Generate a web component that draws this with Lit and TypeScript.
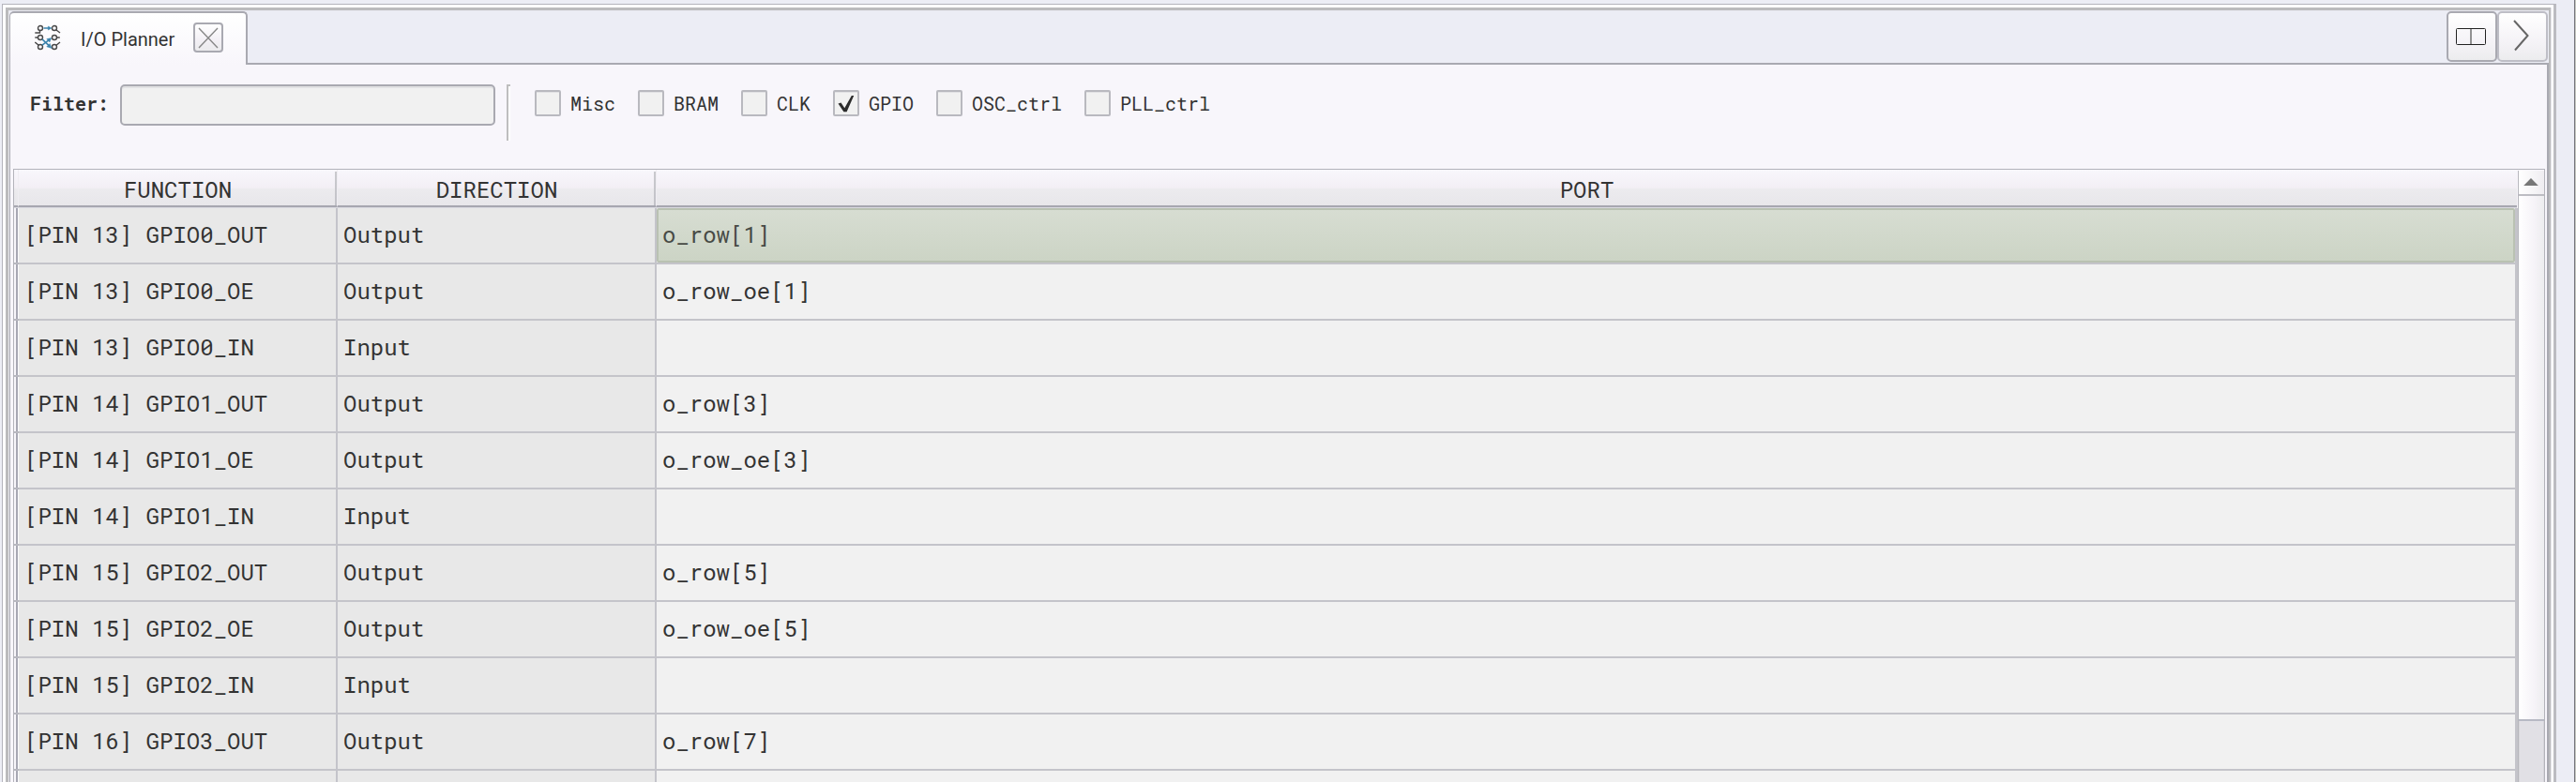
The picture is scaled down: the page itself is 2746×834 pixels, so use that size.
import { LitElement, html, svg, css } from "lit";
import { customElement, property } from "lit/decorators.js";

interface PinRow {
  fn: string;
  dir: string;
  port: string;
}

const ROWS: PinRow[] = [
  { fn: "[PIN 13] GPIO0_OUT", dir: "Output", port: "o_row[1]" },
  { fn: "[PIN 13] GPIO0_OE", dir: "Output", port: "o_row_oe[1]" },
  { fn: "[PIN 13] GPIO0_IN", dir: "Input", port: "" },
  { fn: "[PIN 14] GPIO1_OUT", dir: "Output", port: "o_row[3]" },
  { fn: "[PIN 14] GPIO1_OE", dir: "Output", port: "o_row_oe[3]" },
  { fn: "[PIN 14] GPIO1_IN", dir: "Input", port: "" },
  { fn: "[PIN 15] GPIO2_OUT", dir: "Output", port: "o_row[5]" },
  { fn: "[PIN 15] GPIO2_OE", dir: "Output", port: "o_row_oe[5]" },
  { fn: "[PIN 15] GPIO2_IN", dir: "Input", port: "" },
  { fn: "[PIN 16] GPIO3_OUT", dir: "Output", port: "o_row[7]" },
  { fn: "", dir: "", port: "" },
];

const FILTERS = [
  { name: "Misc", on: false },
  { name: "BRAM", on: false },
  { name: "CLK", on: false },
  { name: "GPIO", on: true },
  { name: "OSC_ctrl", on: false },
  { name: "PLL_ctrl", on: false },
];

@customElement("io-tab-strip")
class IoTabStrip extends LitElement {
  static styles = css`
    :host { display: flex; height: 57px; background: #ecedf5; font-family: Roboto, sans-serif; }
    .tab {
      box-sizing: border-box; width: 254px; display: flex; align-items: center;
      border: 2px solid #a9a9b1; border-bottom: none; border-left-width: 1px;
      border-radius: 5px 5px 0 0;
      background: linear-gradient(#ffffff, #f8f6fb); padding: 0 24px 3px 26px;
    }
    .glyph { display: block; width: 28px; height: 28px; flex: none; }
    .title { flex: 1; padding: 4px 0 0 21px; font-size: 20px; line-height: 24px; color: #333; white-space: nowrap; }
    .close {
      box-sizing: border-box; width: 32px; height: 32px; border: 2px solid #a9a9b1; border-radius: 4px;
      background: linear-gradient(#fff, #f3f0f5 60%, #ebebed);
    }
    .close svg, .btn svg { display: block; }
    .rest { flex: 1; display: flex; justify-content: flex-end; border-bottom: 2px solid #a9a9b1; padding-right: 1px; }
    .btn {
      box-sizing: border-box; width: 54px; height: 54px; border: 2px solid #a9a9b1; border-radius: 5px;
      background: linear-gradient(#fff, #f5f3f7 60%, #ececee);
    }
    .soft { border-color: #bebec6; }
  `;
  render() {
    const ring = (x: number, y: number) => svg`<circle cx=${x} cy=${y} r="2.5"></circle>`;
    return html`
      <div class="tab">
        <svg class="glyph" viewBox="0 0 28 28" fill="none" stroke="#484848" stroke-width="1.4">
          ${[[6, 4], [21, 4], [6, 14], [21, 14], [6, 24], [21, 24]].map(([x, y]) => ring(x, y))}
          <path d="M.3 9H5.5V6.5M23 6l4 3M.3 14h3.2M23.5 14h3.3M.3 19l4 3.3M27 19l-4 3.3" />
          <g stroke="#3d84ad">
            <path d="M9.5 4H16M8 22.2 15.5 16.4M8 15.8 15.5 22.8" stroke-width="1.7" />
            <path d="M14.3 2 17.9 4l-3.6 2zM12.8 15.6l4.9-1-1.8 4.4zM12.8 23.8l5.2 1.6-1.8-5z" fill="#3d84ad" stroke-width=".5" />
          </g>
        </svg>
        <span class="title">I/O Planner</span>
        <div class="close">
          <svg width="28" height="28" viewBox="0 0 28 28" fill="none" stroke="#888" stroke-width="1.4">
            <path d="M4 4 24 25M24 4 4 25" />
          </svg>
        </div>
      </div>
      <div class="rest">
        <div class="btn">
          <svg width="50" height="50" viewBox="0 0 50 50" fill="none" stroke="#222" stroke-width="1">
            <rect x="8.5" y="16.5" width="31" height="17" rx="1" />
            <path d="M24 17v16" stroke="#666" stroke-width="1.4" />
          </svg>
        </div>
        <div class="btn soft">
          <svg width="50" height="50" viewBox="0 0 50 50" fill="none" stroke="#666" stroke-width="2">
            <path d="M16 8 30.5 24 17 39.5" />
          </svg>
        </div>
      </div>
    `;
  }
}

@customElement("io-filter-bar")
class IoFilterBar extends LitElement {
  static styles = css`
    :host {
      display: flex; align-items: flex-start; box-sizing: border-box; height: 111px; padding: 21px 0 0 21px;
      font: 20px/24px "Roboto Mono", "DejaVu Sans Mono", monospace; color: #333;
    }
    .label { width: 96px; padding-top: 8px; font-weight: 700; white-space: nowrap; }
    .input {
      box-sizing: border-box; width: 400px; height: 44px; border: 2px solid #a9a9b1; border-radius: 5px;
      background: #f1f1f1; box-shadow: inset 0 2px 0 #e2e2e4;
    }
    .rule {
      box-sizing: border-box; width: 4px; height: 60px; margin-left: 12px; background: #fff;
      border: solid #bebebe; border-width: 2px 0 0 2px;
    }
    .checks { display: flex; gap: 24px; padding: 6px 0 0 26px; }
    .check { display: flex; align-items: center; gap: 10px; white-space: nowrap; height: 28px; }
    .box {
      box-sizing: border-box; width: 28px; height: 28px; border: 2px solid #b9b9bf; border-radius: 2px;
      background: #f1f1f1; box-shadow: inset 0 1px 0 #e2e2e4;
    }
    .box svg { display: block; }
  `;
  render() {
    return html`
      <span class="label">Filter:</span>
      <div class="input"></div>
      <div class="rule"></div>
      <div class="checks">
        ${FILTERS.map(
          (f) => html`<div class="check">
            <div class="box">
              ${f.on
                ? html`<svg width="24" height="24" viewBox="0 0 24 24"><path d="M3.5 12.6 6.5 11.4 10.3 17.2 17.8 4h2.4L12.6 21.2H9.4Z" fill="#2b2b2b" /></svg>`
                : ""}
            </div>
            <span>${f.name}</span>
          </div>`
        )}
      </div>
    `;
  }
}

@customElement("io-scrollbar")
class IoScrollbar extends LitElement {
  static styles = css`
    :host { display: flex; flex-direction: column; box-sizing: border-box; width: 28px; margin-top: 1px; border-left: 1px solid #b7b7bd; }
    .up { height: 25px; border-bottom: 2px solid #bdbdc3; background: linear-gradient(90deg, #fff, #efedf1); }
    .up svg { display: block; }
    .thumb { height: 558px; border-bottom: 2px solid #b7b9c4; background: linear-gradient(90deg, #fff, #f6f3f8 60%, #ededef); }
    .track { flex: 1; background: #e1e0e5; border: solid #d6d5da; border-width: 0 1px; }
  `;
  render() {
    return html`
      <div class="up"><svg width="27" height="25" viewBox="0 0 27 25"><path d="M5.2 16 13 8l7.8 8z" fill="#777" /></svg></div>
      <div class="thumb"></div>
      <div class="track"></div>
    `;
  }
}

@customElement("io-table")
class IoTable extends LitElement {
  @property({ attribute: false }) rows: PinRow[] = [];
  static styles = css`
    :host {
      display: flex; box-sizing: border-box; height: 654px; margin: 0 2px 0 3px; border: 1px solid #b3b3ba; border-bottom: none;
      overflow: hidden; font: 24px/32px "Roboto Mono", "DejaVu Sans Mono", monospace; color: #333;
    }
    .grid { flex: 1; min-width: 0; background: #f8f6fb; }
    .row { display: grid; grid-template-columns: 5px 340px 340px 1fr; }
    .head {
      height: 41px; box-sizing: border-box; margin-right: 1px; border-bottom: 1px solid #d9d9e0;
      background: linear-gradient(#f8f7fc, #f3eff5 48%, #ecebee 52%, #e7e6ea);
    }
    .head > * { box-sizing: border-box; border-bottom: 2px solid #a7a7b0; border-right: 1px solid #efedf2; }
    .th { text-align: center; padding-top: 5px; background: linear-gradient(#c9c9cd, #c2c2c8) no-repeat 337px 2px / 2px 36px; }
    .head > .last { background: none; border-right: none; }
    .body { border-right: 2px solid #c4c4ca; }
    .stub { border-right: 1px solid #fafafd; background: linear-gradient(90deg, transparent 2px, #a7a7b3 2px); height: 58px; }
    .stubcell { border-bottom: 2px solid #b8b8c0; }
    .td {
      box-sizing: border-box; height: 60px; padding: 12px 0 0 6px; white-space: pre;
      border-right: 2px solid #c4c4ca; border-bottom: 2px solid #c4c4ca; background: #e8e8e8;
    }
    .port { background: #f1f1f1; border-right-width: 1px; }
    .pick { padding: 0; }
    .sel {
      box-sizing: border-box; height: 58px; padding: 10px 0 0 4px; border: 2px solid #b9c1b2; border-radius: 2px;
      background: linear-gradient(#d7ddd2, #ccd4c5); color: #474a45;
    }
  `;
  render() {
    return html`
      <div class="grid">
        <div class="row head">
          <span></span>
          <span class="th">FUNCTION</span>
          <span class="th">DIRECTION</span>
          <span class="th last">PORT</span>
        </div>
        <div class="body">
          ${this.rows.map(
            (r, i) => html`<div class="row">
              <div class="stubcell"><div class="stub"></div></div>
              <div class="td">${r.fn}</div>
              <div class="td">${r.dir}</div>
              ${i === 0
                ? html`<div class="td port pick"><div class="sel">${r.port}</div></div>`
                : html`<div class="td port">${r.port}</div>`}
            </div>`
          )}
        </div>
      </div>
      <io-scrollbar></io-scrollbar>
    `;
  }
}

@customElement("app-root")
class AppRoot extends LitElement {
  static styles = css`
    :host { display: flex; box-sizing: border-box; width: 2746px; height: 834px; overflow: hidden; background: #ecedf5; padding: 4px 0 0 2px; }
    .outer { box-sizing: border-box; width: 2723px; height: 830px; border: 1px solid #b4b4bc; border-right: 3px solid #bbbbc1; border-bottom: none; background: #fff; padding: 3px 3px 0 3px; }
    .inner { box-sizing: border-box; height: 826px; border: solid #bbbbbd; border-width: 3px 2px 0 3px; box-shadow: 1px 0 0 #e6e6ec; }
    .content { height: 823px; box-sizing: border-box; border-top: 1px solid #e8e8ef; border-left: 1px solid #ececf2; background: #f8f6fb; }
    .page { height: 765px; overflow: hidden; border-left: 1px solid #a9a9b1; border-right: 2px solid #a9a9b1; }
    .edge { box-sizing: border-box; height: 834px; width: 2px; margin: -4px 0 0 auto; background: #c6c8c2; border-left: 1px solid #73737a; }
  `;
  render() {
    return html`
      <div class="outer">
        <div class="inner">
          <div class="content">
            <io-tab-strip></io-tab-strip>
            <div class="page">
              <io-filter-bar></io-filter-bar>
              <io-table .rows=${ROWS}></io-table>
            </div>
          </div>
        </div>
      </div>
      <div class="edge"></div>
    `;
  }
}
